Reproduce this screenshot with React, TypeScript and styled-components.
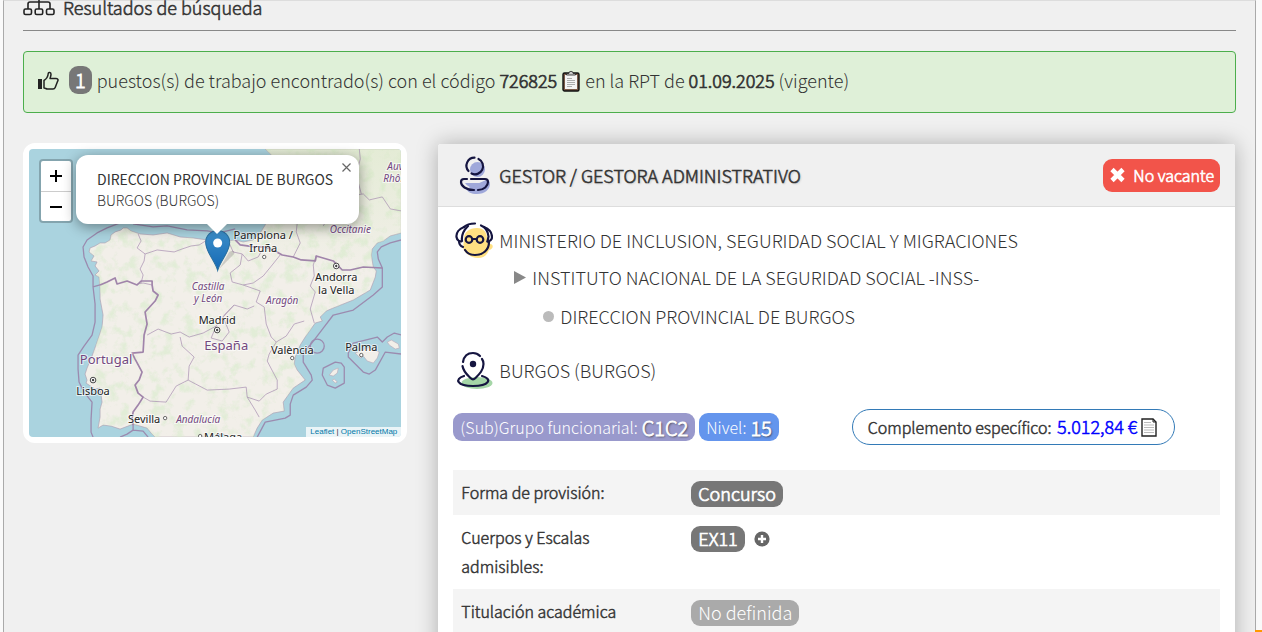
import React from "react";
import styled, { createGlobalStyle, css } from "styled-components";

const Global = createGlobalStyle`
  * { box-sizing: border-box; }
  html { height: 100%; background: #fafafa; overflow: hidden; }
  body {
    margin: 0;
    font-family: "Noto Sans CJK SC", sans-serif;
    font-size: 18px;
    font-weight: 300;
    line-height: 29px;
    color: #333;
  }
  button { font: inherit; cursor: pointer; }
`;

/* Emphasis drawn by thickening the light face, in two strengths. */
const strong = css`
  font-weight: 300;
  -webkit-text-stroke: 0.04em currentColor;
`;
const medium = css`
  font-weight: 300;
  -webkit-text-stroke: 0.03em currentColor;
`;

const Page = styled.div`
  margin: 0 6px 0 3px;
  min-height: 100vh;
  padding: 0 19px;
  border: 1px solid #aaa;
  border-top-color: #ddd;
  border-bottom: 0;
  background: #f0f0f0;
`;

const Heading = styled.h1`
  display: flex;
  align-items: center;
  gap: 8px;
  height: 30px;
  margin: 0 0 20px;
  padding-bottom: 18px;
  border-bottom: 1px solid #888;
  font-size: 18px;
  line-height: 14px;
  ${medium}
`;

const Alert = styled.div`
  display: flex;
  align-items: center;
  gap: 5px;
  height: 62px;
  padding: 0 15px 3px 14px;
  margin-bottom: 30px;
  border: 1px solid #4cae4c;
  border-radius: 4px;
  background: #dff0d8;
  white-space: nowrap;
  b { ${strong} }
`;

const Count = styled.span`
  padding: 0 6px;
  margin: 0 0 1px 5px;
  border-radius: 9px;
  background: #777;
  color: #fff;
  font-size: 20px;
  line-height: 28px;
  ${strong}
`;

const IconButton = styled.button`
  display: inline-flex;
  align-items: center;
  padding: 0;
  border: 0;
  background: none;
`;

const Columns = styled.div`
  display: grid;
  grid-template-columns: calc((100% - 60px) / 3) 1fr;
  gap: 30px;
  align-items: start;
`;

const MapFrame = styled.div`
  position: relative;
  border: 6px solid #fff;
  border-radius: 12px;
  background: #fff;
`;

const MapClip = styled.div`
  position: relative;
  height: 288px;
  overflow: hidden;
  border-radius: 4px;
  background: #aad3df;
`;

const MapSvg = styled.svg`
  display: block;
  width: 100%;
  height: 100%;
`;

const ZoomControl = styled.div`
  position: absolute;
  left: 10px;
  top: 10px;
  width: 34px;
  border: 2px solid rgba(0, 0, 0, 0.22);
  border-radius: 4px;
  background: #fff;
  background-clip: padding-box;
`;

const ZoomButton = styled.button`
  display: flex;
  width: 100%;
  height: 30px;
  align-items: center;
  justify-content: center;
  padding: 0;
  border: 0;
  background: none;
  & + & { border-top: 1px solid #ccc; }
`;

const Popup = styled.div`
  position: absolute;
  left: 47px;
  top: 6px;
  width: 283px;
  height: 69px;
  padding: 14px 21px;
  border-radius: 12px;
  background: #fff;
  box-shadow: 0 3px 14px rgba(0, 0, 0, 0.4);
  font-size: 14px;
  line-height: 21px;
  white-space: nowrap;
  b { display: block; font-weight: 400; }
  &::after {
    content: "";
    position: absolute;
    left: 130px;
    top: 68px;
    border: 11px solid transparent;
    border-top-color: #fff;
    border-bottom: 0;
  }
`;

const PopupClose = styled.button`
  position: absolute;
  right: 7px;
  top: 7px;
  display: flex;
  padding: 1px;
  border: 0;
  background: none;
`;

const Attribution = styled.div`
  position: absolute;
  right: 0;
  bottom: 0;
  padding: 0 4px;
  background: rgba(255, 255, 255, 0.75);
  font: 8px/10px "Liberation Sans", sans-serif;
  a { color: #0078a8; text-decoration: none; }
`;

const Card = styled.section`
  margin: 1px 1px 0;
  border-radius: 3px;
  background: #fff;
  box-shadow: 0 0 22px rgba(0, 0, 0, 0.28);
`;

const CardHeader = styled.header`
  display: flex;
  align-items: center;
  justify-content: space-between;
  height: 63px;
  padding: 0 15px 0 21px;
  border-bottom: 1px solid #ddd;
  border-radius: 3px 3px 0 0;
  background: #f0f0f0;
`;

const Title = styled.h2`
  display: flex;
  align-items: center;
  gap: 6px;
  margin: 0;
  font-size: 18px;
  text-shadow: 1px 1px 2px rgba(0, 0, 0, 0.2);
  ${medium}
`;

const Vacancy = styled.span`
  display: flex;
  align-items: center;
  gap: 7px;
  height: 33px;
  padding: 0 6px;
  border-radius: 9px;
  background: #f2544a;
  color: #fff;
  font-size: 16px;
  ${strong}
`;

const CardBody = styled.div`
  padding: 14px 15px 0;
`;

const OrgLine = styled.div<{ $indent?: number; $height: number }>`
  display: flex;
  align-items: center;
  gap: 6px;
  height: ${(p) => p.$height}px;
  padding-left: ${(p) => p.$indent ?? 2}px;
`;

const Facts = styled.div`
  display: grid;
  grid-template-columns: 1fr 1fr;
  align-items: center;
  margin: 4px 0 25px;
`;

const Tags = styled.div`
  display: flex;
  gap: 4px;
`;

const Tag = styled.span<{ $bg: string }>`
  display: inline-flex;
  align-items: center;
  gap: 4px;
  height: 28px;
  padding: 0 7px;
  border-radius: 9px;
  background: ${(p) => p.$bg};
  color: #fff;
  font-size: 16px;
  white-space: nowrap;
  b {
    font-size: 20px;
    text-shadow: 1px 1px 2px #333;
    ${strong}
  }
`;

const Supplement = styled.div`
  justify-self: start;
  display: flex;
  align-items: center;
  gap: 4px;
  height: 36px;
  margin-left: 15px;
  padding: 0 17px 0 15px;
  border: 1px solid #337ab7;
  border-radius: 18px;
  font-size: 16px;
  white-space: nowrap;
  ${medium}
  b { margin-left: 2px; color: #00f; font-size: 18px; ${medium} }
`;

const Table = styled.table`
  width: 100%;
  border-collapse: collapse;
  font-size: 16px;
  tr:nth-child(odd) { background: #f4f4f4; }
  th, td { padding: 8px; text-align: left; vertical-align: top; }
  th { width: 230px; padding-right: 60px; ${medium} }
`;

const Values = styled.div`
  display: flex;
  align-items: center;
  gap: 9px;
  height: 29px;
  padding-top: 3px;
`;

const Badge = styled.span<{ $muted?: boolean }>`
  height: 26px;
  padding: 0 7px;
  border-radius: 9px;
  background: ${(p) => (p.$muted ? "#aaa" : "#777")};
  color: #fff;
  font-size: 18px;
  line-height: 25px;
  ${(p) => !p.$muted && strong}
`;

const Corner = styled.div`
  position: fixed;
  right: 0;
  bottom: 0;
  width: 7px;
  height: 2px;
  background: #ff9800;
`;

const SitemapIcon = () => (
  <svg width="32" height="18" viewBox="0 0 32 18" fill="none" stroke="#222" strokeWidth="1.6">
    <path d="M16 0v11M5 11V6q0-2 2-2h18q2 0 2 2v5" />
    <rect x="1" y="11" width="7.5" height="5.5" rx="1.5" />
    <rect x="12.2" y="11" width="7.5" height="5.5" rx="1.5" />
    <rect x="23.5" y="11" width="7.5" height="5.5" rx="1.5" />
  </svg>
);

const ThumbIcon = () => (
  <svg width="21" height="20" viewBox="0 0 21 20">
    <path d="M0 8h4v10H0z" fill="#222" />
    <path
      d="M6 9.500c2.500-1.500 4-4 4.300-7.200.1-1.400 2.700-1.300 2.700 1 0 1.700-.5 3-1 4.200h6.200c2 0 2.200 1.800 1.300 3l-2.300 6c-.4 1-1 1.500-2.200 1.500H9.500C8 18 7.500 17 6 17z"
      fill="none"
      stroke="#222"
      strokeWidth="1.5"
      strokeLinejoin="round"
    />
  </svg>
);

const ClipboardIcon = () => (
  <svg width="18" height="22" viewBox="0 0 18 22">
    <rect x="1" y="3" width="16" height="18" rx="1.5" fill="#7a5a48" stroke="#111" strokeWidth="1.4" />
    <rect x="3" y="5" width="12" height="14" fill="#f4f4f4" />
    <path d="M4.500 5V3.500h2.300a2.200 2.200 0 0 1 4.400 0h2.300V5z" fill="#ccc" stroke="#222" strokeWidth=".8" />
    <path d="M5 8.500h5M5 10.500h8M5 12.500h8M5 14.500h8M5 16.500h5" stroke="#999" strokeWidth=".8" />
  </svg>
);

const PageIcon = () => (
  <svg width="16" height="19" viewBox="0 0 16 19">
    <path d="M1 1h11l3 3v14H1z" fill="#fff" stroke="#222" strokeWidth="1.4" />
    <path d="M12 1v3h3" fill="none" stroke="#222" />
    <path d="M3 4.500h7M3 7h10M3 9.500h10M3 12h10M3 14.500h10" stroke="#bbb" />
  </svg>
);

const UserIcon = () => (
  <svg width="34" height="40" viewBox="0 0 34 40" fill="none" strokeLinecap="round">
    <circle cx="18.5" cy="14.5" r="7.5" fill="#9fa8da" />
    <path d="M27 25q4 0 4 4c0 5-5 10-13 10-6 0-9-2-11-5z" fill="#9fa8da" />
    <path d="M6 28h22q-3 5-11 5T6 28z" fill="#9fa8da" />
    <g stroke="#151540" strokeWidth="2.2">
      <path d="M9.500 16a8 8 0 0 1 6-13.300M19.500 4a8 8 0 1 1-7 14.500" />
      <path d="M8 24H5q-3 0-3 3c0 4 5 8 13 8M12 24h14q3 0 3 3c0 4-4 8-10 8" />
    </g>
  </svg>
);

const MinisterIcon = () => (
  <svg width="38" height="36" viewBox="0 0 38 36" fill="none" strokeLinecap="round">
    <path d="M9 17c0-7 5-11 13-11 7 0 10 4 10 11l2 5c5-1 5 5 0 6-2 5-5 8-11 8S10 32 8 26z" fill="#ffe082" />
    <g stroke="#151540" strokeWidth="2.2">
      <path d="M9 5C12 2 16 1.500 20 1.500M26 3.500c5 2 7 6 7.500 11l-1 5" />
      <path d="M9 5C4 7 1 11 1.500 15c.5 4 4 5 5.500 4M7 19c-1-7 2-11 6-15M29 5c5 2 8 5 8 10 0 3-2 4-4.500 4.500" />
      <path d="M4 19c0 3 1 5 4 6M34 20c0 8-6 13-14 13-4 0-8-2-10-5" />
      <circle cx="14" cy="17.500" r="3.3" />
      <circle cx="25" cy="17.500" r="3.3" />
      <path d="M17.500 17h4" />
    </g>
  </svg>
);

const PlaceIcon = () => (
  <svg width="37" height="39" viewBox="0 0 37 39" fill="none" strokeLinecap="round">
    <ellipse cx="21" cy="32" rx="15.5" ry="6" fill="#a5d6a7" />
    <g stroke="#151540" strokeWidth="2.2">
      <path d="M7 11C8 5 12 2 17 2c3 0 5 1 7 3M6.500 15c1 6 5 9 8 12q2.500 2.500 5 0c4-4 8-8 8-14q0-3-1.500-5" />
      <path d="M8 25c-10 3-7 10 9 10s20-7 9-10" />
    </g>
    <circle cx="17" cy="13" r="3.2" fill="#151540" />
  </svg>
);

const PlusIcon = () => (
  <svg width="16" height="16" viewBox="0 0 16 16">
    <circle cx="8" cy="8" r="7.6" fill="#666" />
    <path d="M8 4v8M4 8h8" stroke="#fff" strokeWidth="2.4" />
  </svg>
);

const landPath =
  "M61 99L66 97 71 94 76 94 81 91 82 86 86 83 92 81 94 79 98 79 102 82 111 85 124 86 138 84 151 88 164 89 178 91 192 93 206 91 214 93 224 91 231 84 236 76 242 50 248 12 240 4 236 0H372V84L361 87 354 92 348 94 343 100 342 106 344 118 347 122 346 128 341 141 324 151 304 159 297 162 291 168 293 172 286 174 281 181 276 188 271 196 266 208 265 215 268 221 276 231 264 239 259 246 254 253 255 262 244 264 233 271 228 279 224 288H200L194 285H188L184 288H126L122 284 118 279 111 277 104 275 91 280 82 277 74 276 69 279 71 268 71 260 73 253 71 239 66 240 57 234 58 231 56 225 58 219 63 207 68 193 73 178 74 166 71 150 71 139 70 128 66 126 70 122 66 117 68 113 62 112 65 107 60 103Z";

const provinceLines = [
  "M109 85L112 92 108 99 116 105 115 112 111 120 114 126 112 134",
  "M116 105L128 101 145 103 153 100 162 97 170 96 178 91",
  "M123 136L114 134 108 135",
  "M118 186L129 180 142 185 151 183 160 188 174 184 187 177 196 165 205 156 218 160 225 157",
  "M200 94L204 103 213 105 211 116 201 124 203 133 214 136 224 134 234 127 243 116 251 106",
  "M213 105L219 112 229 108 234 99",
  "M214 136L231 142 227 153 235 158 237 175 242 188 247 193 257 187 265 175 275 172",
  "M151 188L153 197 165 208 160 217 159 231 147 237 137 253 121 252 114 248",
  "M159 231L178 241 200 240 217 238 218 248 230 252 237 245 248 240 248 231 238 212 240 205 247 193",
  "M218 248L226 261 230 268",
  "M205 156L194 168 200 183 193 192 182 189 187 177",
  "M285 174L281 160 286 143 281 137 285 127 284 116 287 107",
  "M264 108L271 94 267 83 268 74",
  "M294 77L303 62 313 55 322 47 334 45 340 51 353 48 361 60 372 62",
  "M332 45L327 26 331 10 330 0",
];

type MapLabel = { x: number; y: number; t: string; k?: "region" | "country"; start?: boolean };
const labels: MapLabel[] = [
  { x: 234, y: 90, t: "Pamplona /" },
  { x: 234, y: 103, t: "Iruña" },
  { x: 307, y: 132, t: "Andorra" },
  { x: 307, y: 145, t: "la Vella" },
  { x: 188, y: 175, t: "Madrid" },
  { x: 263, y: 205, t: "València" },
  { x: 332, y: 202, t: "Palma" },
  { x: 64, y: 246, t: "Lisboa" },
  { x: 115, y: 274, t: "Sevilla" },
  { x: 194, y: 292, t: "Málaga" },
  { x: 321, y: 84, t: "Occitanie", k: "region" },
  { x: 358, y: 21, t: "Auvergne-", k: "region", start: true },
  { x: 354, y: 33, t: "Rhône-Alpes", k: "region", start: true },
  { x: 179, y: 141, t: "Castilla", k: "region" },
  { x: 179, y: 153, t: "y León", k: "region" },
  { x: 253, y: 155, t: "Aragón", k: "region" },
  { x: 169, y: 274, t: "Andalucía", k: "region" },
  { x: 197, y: 201, t: "España", k: "country" },
  { x: 77, y: 215, t: "Portugal", k: "country" },
];

const MapText = styled.text<{ $kind?: string }>`
  font-family: "Noto Sans", sans-serif;
  font-size: ${(p) => (p.$kind === "region" ? 10 : p.$kind === "country" ? 13 : 11)}px;
  font-style: ${(p) => (p.$kind === "region" ? "italic" : "normal")};
  font-weight: 400;
  fill: ${(p) => (p.$kind ? "#73487f" : "#222")};
  stroke: rgba(255, 255, 255, 0.65);
  stroke-width: 2px;
  paint-order: stroke;
`;

const MapDrawing = () => (
  <MapSvg viewBox="0 0 372 288" preserveAspectRatio="xMidYMid slice">
    <defs>
      <clipPath id="land"><path d={landPath} /></clipPath>
      <filter id="woods" x="0" y="0" width="100%" height="100%">
        <feTurbulence type="fractalNoise" baseFrequency="0.09" numOctaves="5" seed="8" />
        <feColorMatrix values="0 0 0 0 .68  0 0 0 0 .83  0 0 0 0 .6  0 4 0 0 -1.95" />
      </filter>
      <linearGradient id="pin" x2="0" y2="1">
        <stop offset="0" stopColor="#3d8fc9" />
        <stop offset="1" stopColor="#1569b5" />
      </linearGradient>
      <linearGradient id="north" x2="0" y2="1">
        <stop offset="0" stopColor="#cfe6b8" stopOpacity=".4" />
        <stop offset="1" stopColor="#cfe6b8" stopOpacity="0" />
      </linearGradient>
    </defs>
    <path d={landPath} fill="#f2efe9" stroke="#b0a3b5" strokeWidth=".7" />
    <g clipPath="url(#land)">
      <rect width="372" height="288" filter="url(#woods)" opacity=".6" />
      <rect x="190" width="182" height="120" fill="url(#north)" />
    </g>
    <g fill="#f2efe9" stroke="#b9a8b9" strokeWidth=".6">
      <path d="M326 204l7-3 8-3 3 3 6 2-2 6-4 5-6-2-4-5-3 2z" />
      <path d="M358 193l4-2 7 4 1 4-4 1-6-4z" />
      <path d="M300 226l4-5 5-2-1 5-4 3zM303 231l2-1 3 3-2 1z" />
    </g>
    <g fill="none" stroke="#a58bae" strokeWidth=".8" opacity=".85" strokeLinejoin="round">
      {provinceLines.map((d) => <path key={d} d={d} />)}
    </g>
    <g fill="none" stroke="#9a83aa" strokeWidth="1.3" strokeLinejoin="round" opacity=".9">
      <path d="M91 74L78 79 68 84 58 91 54 98 55 108 59 118 64 127 64 138 66 155 66 173 63 186 55 197 49 206 49 220 50 233 55 243 63 253 62 270 62 283 64 288M64 138L71 136M91 288L98 285 104 281 114 282 119 288M104 276V281" />
      <path d="M104 75L124 78 138 77 158 81 178 82 190 84 206 80" />
      <path d="M372 91L361 94 352 98 348 103 349 110 353 119 353 138 344 146 324 161 304 166 294 179 281 196 274 204 274 213 282 226 283 231 277 238 264 246 261 255 261 266 256 269 236 273 228 288" />
      <circle cx="288" cy="197" r="7" />
      <path d="M294 219L306 213 312 214 315 218 315 234 306 239 298 236 293 226ZM319 204L324 194 348 188 353 193 358 188 365 184 372 186M319 204V208L334 223 340 225 346 221 356 203 372 205" />
    </g>
    <g fill="none" stroke="#a084aa" strokeWidth="1.7" strokeLinejoin="round">
      <path d="M71 136L78 133 86 129 88 135 98 132 108 136 112 132 123 132 123 136 124 142 129 146 126 152 116 163 118 175 115 186 114 203 103 204 106 210 113 223 110 231 106 236 109 244 114 248 109 256 104 263 103 270 104 276" />
      <path d="M206 91L211 96 225 98 236 98 244 101 253 106 264 108 272 111 286 112 287 107 304 112 313 121 321 121 334 118 353 119" />
    </g>
    {[[235, 108], [263, 209], [332, 206], [136, 269], [171, 287]].map(([x, y]) => (
      <circle key={x} cx={x} cy={y} r="1.7" fill="#fff" stroke="#444" strokeWidth=".8" />
    ))}
    {[[307, 117], [188, 181], [64, 231]].map(([x, y]) => (
      <g key={x} stroke="#333" strokeWidth=".9">
        <circle cx={x} cy={y} r="2.8" fill="#fff" />
        <circle cx={x} cy={y} r=".8" />
      </g>
    ))}
    {labels.map((l) => (
      <MapText key={l.t} x={l.x} y={l.y} $kind={l.k} textAnchor={l.start ? "start" : "middle"}>{l.t}</MapText>
    ))}
    <path d="M190 120l10-17q6-3 5 2z" fill="#000" opacity=".15" />
    <path d="M188.500 121.500C186 112 176.500 103 176.500 93.500a12 12 0 0 1 24 0C200.500 103 191 112 188.500 121.500z" fill="url(#pin)" stroke="#2a6f9f" />
    <circle cx="188.5" cy="94" r="4.5" fill="#fff" />
  </MapSvg>
);

export default function App() {
  return (
    <>
      <Global />
      <Page>
        <Heading><SitemapIcon />Resultados de búsqueda</Heading>
        <Alert>
          <ThumbIcon />
          <Count>1</Count>
          <span>puestos(s) de trabajo encontrado(s) con el código <b>726825</b></span>
          <IconButton aria-label="Copiar código"><ClipboardIcon /></IconButton>
          <span>en la RPT de <b>01.09.2025</b> (vigente)</span>
        </Alert>
        <Columns>
          <MapFrame>
            <MapClip>
              <MapDrawing />
              <Attribution><a href="#leaflet">Leaflet</a> | <a href="#osm">OpenStreetMap</a></Attribution>
            </MapClip>
            <ZoomControl>
              <ZoomButton aria-label="Acercar">
                <svg width="12" height="12"><path d="M6 0v12M0 6h12" stroke="#000" strokeWidth="2" /></svg>
              </ZoomButton>
              <ZoomButton aria-label="Alejar">
                <svg width="12" height="12"><path d="M0 6h12" stroke="#000" strokeWidth="2" /></svg>
              </ZoomButton>
            </ZoomControl>
            <Popup>
              <b>DIRECCION PROVINCIAL DE BURGOS</b>
              BURGOS (BURGOS)
              <PopupClose aria-label="Cerrar">
                <svg width="9" height="9"><path d="M.5.5l8 8M8.500.5l-8 8" stroke="#666" strokeWidth="1.2" /></svg>
              </PopupClose>
            </Popup>
          </MapFrame>
          <Card>
            <CardHeader>
              <Title><UserIcon />GESTOR / GESTORA ADMINISTRATIVO</Title>
              <Vacancy>
                <svg width="17" height="16" viewBox="0 0 17 16"><path d="M3 2.500l11 11M14 2.500l-11 11" stroke="#fff" strokeWidth="4.6" /></svg>
                No vacante
              </Vacancy>
            </CardHeader>
            <CardBody>
              <OrgLine $height={38}><MinisterIcon />MINISTERIO DE INCLUSION, SEGURIDAD SOCIAL Y MIGRACIONES</OrgLine>
              <OrgLine $height={37} $indent={61}>
                <svg width="12" height="13"><path d="M0 0l12 6.500L0 13z" fill="#888" /></svg>
                INSTITUTO NACIONAL DE LA SEGURIDAD SOCIAL -INSS-
              </OrgLine>
              <OrgLine $height={40} $indent={90}>
                <svg width="11" height="11"><circle cx="5.5" cy="5.5" r="5.5" fill="#bbb" /></svg>
                DIRECCION PROVINCIAL DE BURGOS
              </OrgLine>
              <OrgLine $height={69} $indent={3}><PlaceIcon />BURGOS (BURGOS)</OrgLine>
              <Facts>
                <Tags>
                  <Tag $bg="#9999cc">(Sub)Grupo funcionarial: <b>C1C2</b></Tag>
                  <Tag $bg="#6495ed">Nivel: <b>15</b></Tag>
                </Tags>
                <Supplement>
                  <span>Complemento específico: <b>5.012,84 €</b></span>
                  <IconButton aria-label="Ver detalle"><PageIcon /></IconButton>
                </Supplement>
              </Facts>
              <Table>
                <tbody>
                  <tr>
                    <th scope="row">Forma de provisión:</th>
                    <td><Values><Badge>Concurso</Badge></Values></td>
                  </tr>
                  <tr>
                    <th scope="row">Cuerpos y Escalas admisibles:</th>
                    <td><Values><Badge>EX11</Badge><IconButton aria-label="Ver más"><PlusIcon /></IconButton></Values></td>
                  </tr>
                  <tr>
                    <th scope="row">Titulación académica requerida:</th>
                    <td><Values><Badge $muted>No definida</Badge></Values></td>
                  </tr>
                </tbody>
              </Table>
            </CardBody>
          </Card>
        </Columns>
      </Page>
      <Corner />
    </>
  );
}
